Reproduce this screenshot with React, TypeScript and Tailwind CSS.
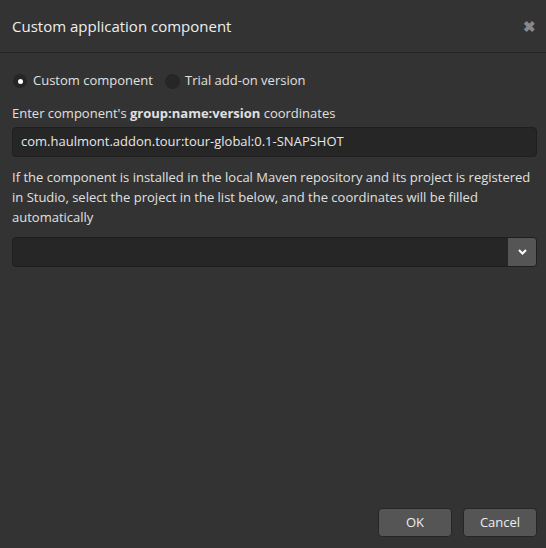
export default function App() {
  return (
    <div
      className="w-[546px] h-[548px] bg-[#333333] flex flex-col text-[#e0e0e0] text-[13px]"
      style={{ fontFamily: '"Open Sans", sans-serif' }}
    >
      {/* Header */}
      <div className="h-[53px] flex items-center justify-between pl-3 pr-[10px] border-b border-[#262626] shrink-0">
        <span className="text-[15px] text-[#eeeeee]">Custom application component</span>
        <span className="text-[#888888] text-[15px] font-bold leading-none">✖</span>
      </div>

      {/* Body */}
      <div className="flex-1 flex flex-col pl-3 pr-[9px] pt-[17px]">
        <div className="flex items-center h-[22px]">
          <div className="w-[14px] h-[14px] rounded-full bg-[#262626] flex items-center justify-center mr-[6px] ml-[1px]">
            <div className="w-[5px] h-[5px] rounded-full bg-white" />
          </div>
          <span>Custom component</span>
          <div className="w-[15px] h-[15px] rounded-full bg-[#262626] ml-[12px] mr-[5px]" />
          <span>Trial add-on version</span>
        </div>

        <div className="mt-[11px] h-[20px] leading-[20px]">
          Enter component's <b className="font-bold">group:name:version</b> coordinates
        </div>

        <div className="mt-[4px] h-[30px] rounded-[4px] bg-[#262626] border border-[#1f1f1f] flex items-center px-[8px] text-[#e6e6e6]">
          com.haulmont.addon.tour:tour-global:0.1-SNAPSHOT
        </div>

        <p className="mt-[10px] leading-[20px] pr-[3px]">
          If the component is installed in the local Maven repository and its project is registered in Studio, select the project in the list below, and the coordinates will be filled automatically
        </p>

        <div className="mt-[10px] h-[30px] rounded-[4px] bg-[#262626] border border-[#1f1f1f] flex overflow-hidden">
          <div className="flex-1" />
          <div className="w-[28px] bg-[#555555] flex items-center justify-center">
            <svg width="9" height="6" viewBox="0 0 9 6">
              <path d="M1 1 L4.5 4.5 L8 1" stroke="#ffffff" strokeWidth="2" fill="none" />
            </svg>
          </div>
        </div>
      </div>

      {/* Footer */}
      <div className="flex justify-end gap-[11px] px-[9px] pb-[11px]">
        <button className="w-[74px] h-[29px] rounded-[4px] bg-[#555555] border border-[#262626] text-[#eeeeee]">
          OK
        </button>
        <button className="w-[74px] h-[29px] rounded-[4px] bg-[#555555] border border-[#262626] text-[#eeeeee]">
          Cancel
        </button>
      </div>
    </div>
  );
}
